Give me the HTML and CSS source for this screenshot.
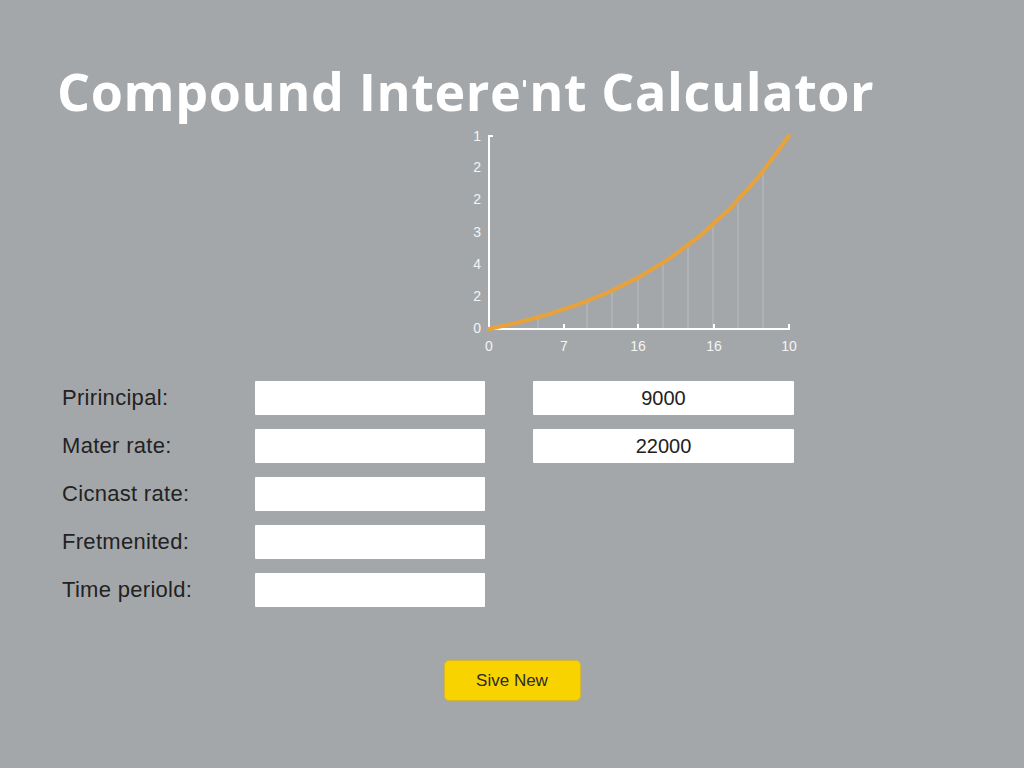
FILE: index.html
```html
<!DOCTYPE html>
<html lang="en">
<head>
    <meta charset="UTF-8">
    <meta name="viewport" content="width=device-width, initial-scale=1.0">
    <title>Compound Interest Calculator</title>
    <link rel="stylesheet" href="styles.css">
</head>
<body>
    <main class="page">
        <h1 class="title">Compound Intere<span class="tick"></span>nt Calculator</h1>

        <div class="chart">
            <svg width="360" height="235" viewBox="0 0 360 235">
                <!-- faint drop lines from the curve to the axis -->
                <g class="grid">
                    <line x1="78" y1="191" x2="78" y2="203"/>
                    <line x1="127" y1="175" x2="127" y2="203"/>
                    <line x1="152" y1="165" x2="152" y2="203"/>
                    <line x1="178" y1="152" x2="178" y2="203"/>
                    <line x1="203" y1="137" x2="203" y2="203"/>
                    <line x1="228" y1="119" x2="228" y2="203"/>
                    <line x1="253" y1="99" x2="253" y2="203"/>
                    <line x1="278" y1="74" x2="278" y2="203"/>
                    <line x1="303" y1="46" x2="303" y2="203"/>
                </g>
                <g class="axis">
                    <polyline points="33,10 29,10 29,203 329,203 329,198"/>
                    <line x1="104" y1="203" x2="104" y2="198"/>
                    <line x1="178" y1="203" x2="178" y2="198"/>
                    <line x1="254" y1="203" x2="254" y2="198"/>
                </g>
                <polyline class="curve" points="29,203 59,196.3 89,188.1 119,178.2 149,166 179,151.1 209,132.9 239,110.7 269,83.6 299,50.5 329,10"/>
                <g class="ylabels">
                    <text x="21" y="11">1</text>
                    <text x="21" y="42">2</text>
                    <text x="21" y="74">2</text>
                    <text x="21" y="107">3</text>
                    <text x="21" y="139">4</text>
                    <text x="21" y="171">2</text>
                    <text x="21" y="203">0</text>
                </g>
                <g class="xlabels">
                    <text x="29" y="221">0</text>
                    <text x="104" y="221">7</text>
                    <text x="178" y="221">16</text>
                    <text x="254" y="221">16</text>
                    <text x="329" y="221">10</text>
                </g>
            </svg>
        </div>

        <form class="form">
            <label class="label">Pririncipal:</label>
            <input class="field" type="text">
            <span></span>
            <input class="field result" type="text" value="9000">

            <label class="label">Mater rate:</label>
            <input class="field" type="text">
            <span></span>
            <input class="field result" type="text" value="22000">

            <label class="label">Cicnast rate:</label>
            <input class="field" type="text">
            <span></span>
            <span></span>

            <label class="label">Fretmenited:</label>
            <input class="field" type="text">
            <span></span>
            <span></span>

            <label class="label">Time periold:</label>
            <input class="field" type="text">
            <span></span>
            <span></span>
        </form>

        <div class="actions">
            <button type="button" class="save">Sive New</button>
        </div>
    </main>
</body>
</html>
```

FILE: styles.css
```css
body {
    margin: 0;
    background: #a4a7aa;
    font-family: "Liberation Sans", Arial, sans-serif;
    height: 768px;
    overflow: hidden;
}

.page {
    padding: 56px 0 0 0;
}

.title {
    margin: 0 0 0 57px;
    height: 70px;
    font-family: "Open Sans", sans-serif;
    font-weight: 700;
    font-size: 52px;
    line-height: 70px;
    color: #ffffff;
    letter-spacing: 0.6px;
}

/* little stray mark between "e" and "n" */
.tick {
    display: inline-block;
    width: 3px;
    height: 7px;
    margin: 0 3px 0 2px;
    background: #ffffff;
    border-radius: 1px;
    vertical-align: 24px;
}

.chart {
    margin-left: 460px;
    height: 235px;
}

.chart svg {
    display: block;
}

.grid line {
    stroke: rgba(255, 255, 255, 0.25);
    stroke-width: 1;
}

.axis polyline,
.axis line {
    fill: none;
    stroke: #ffffff;
    stroke-width: 2;
}

.curve {
    fill: none;
    stroke: #e9a23a;
    stroke-width: 4;
    stroke-linejoin: round;
    stroke-linecap: round;
}

.ylabels text,
.xlabels text {
    font-family: "Liberation Sans", Arial, sans-serif;
    font-size: 14px;
    fill: #f4f4f4;
    dominant-baseline: middle;
}

.ylabels text {
    text-anchor: end;
}

.xlabels text {
    text-anchor: middle;
}

.form {
    display: grid;
    grid-template-columns: 193px 230px 48px 261px;
    grid-auto-rows: 34px;
    row-gap: 14px;
    margin: 20px 0 0 62px;
    align-items: center;
}

.label {
    font-size: 22px;
    color: #222222;
    letter-spacing: 0.3px;
}

.field {
    box-sizing: border-box;
    height: 34px;
    width: 100%;
    border: none;
    border-radius: 1px;
    background: #ffffff;
    padding: 0 10px;
    font-family: "Liberation Sans", Arial, sans-serif;
    font-size: 20px;
    color: #222222;
}

.result {
    text-align: center;
}

.actions {
    display: flex;
    justify-content: center;
    margin-top: 53px;
}

.save {
    width: 137px;
    height: 41px;
    background: #f8d300;
    border: 1px solid #d6b630;
    border-radius: 5px;
    font-family: "Liberation Sans", Arial, sans-serif;
    font-size: 17px;
    color: #2b2b2b;
    cursor: pointer;
}
```
